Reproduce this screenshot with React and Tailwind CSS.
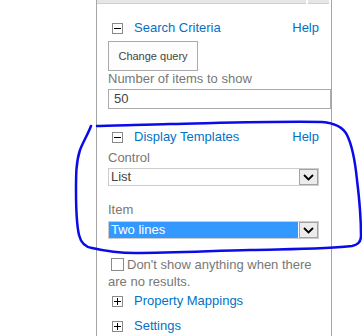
import React from "react";

const font = { fontFamily: '"Liberation Sans", Arial, sans-serif' };

function ToggleBox({ plus }) {
  return (
    <span className="flex h-[11px] w-[11px] shrink-0 items-center justify-center border border-[#8a8a8a] bg-white">
      <svg width="7" height="7" viewBox="0 0 7 7">
        <rect x="0" y="3" width="7" height="1" fill="#000" />
        {plus && <rect x="3" y="0" width="1" height="7" fill="#000" />}
      </svg>
    </span>
  );
}

function Header({ title, help, className = "" }) {
  return (
    <div className={`flex h-[16px] items-center pl-[4px] pr-[12px] text-[13px] leading-[16px] text-[#0072c6] ${className}`}>
      <ToggleBox plus={!help} />
      <span className="ml-[11px] flex-1">{title}</span>
      {help && <span>Help</span>}
    </div>
  );
}

function Select({ value, selected, className = "" }) {
  return (
    <div className={`flex h-[18px] w-[211px] items-stretch border border-[#cdcdcd] bg-white ${className}`}>
      <div
        className={`flex flex-1 items-center pl-[2px] text-[13px] leading-[16px] ${
          selected ? "bg-[#3399ff] text-white" : "text-[#444]"
        }`}
      >
        {value}
      </div>
      <div className="ml-[1px] flex w-[19px] items-center justify-center border border-[#a3a3a3] bg-[#ececec]">
        <svg width="11" height="7" viewBox="0 0 11 7">
          <polyline points="1,1 5.5,5.5 10,1" fill="none" stroke="#000" strokeWidth="1.8" />
        </svg>
      </div>
    </div>
  );
}

export default function App() {
  return (
    <div className="relative h-[336px] w-[362px] overflow-hidden bg-white" style={font}>
      <div className="ml-[96px] h-full w-[236px] border-x border-[#a6a6a6]">
        <div className="flex h-[4px]">
          <div className="w-[209px] border-b border-[#cfcfcf] bg-[#e6e6e6]" />
          <div className="w-[2px]" />
          <div className="w-[21px] border-b border-[#cfcfcf] bg-[#e6e6e6]" />
        </div>
        <div className="pl-[11px]">
          <Header title="Search Criteria" help className="mt-[16px]" />
          <button className="mt-[5px] flex h-[30px] w-[90px] items-center justify-center border border-[#ababab] bg-[#fdfdfd] text-[11px] text-[#444]">
            Change query
          </button>
          <div className="text-[13px] leading-[16px] text-[#777]">Number of items to show</div>
          <div className="mt-[2px] flex h-[20px] w-[223px] items-center border border-[#ababab] bg-white pl-[5px] text-[13px] text-[#444]">
            50
          </div>

          <Header title="Display Templates" help className="mt-[20px]" />
          <div className="mt-[5px] text-[13px] leading-[16px] text-[#777]">Control</div>
          <Select value="List" className="mt-[2px]" />
          <div className="mt-[16px] text-[13px] leading-[16px] text-[#777]">Item</div>
          <Select value="Two lines" selected className="mt-[3px]" />

          <p className="mt-[17px] pr-[14px] text-[13px] leading-[17px] text-[#777]">
            <span className="ml-[3px] mr-[3px] inline-block h-[13px] w-[13px] border border-[#8a8a8a] bg-white align-[-2px]" />
            Don't show anything when there are no results.
          </p>

          <Header title="Property Mappings" className="mt-[3px]" />
          <Header title="Settings" className="mt-[9px]" />
        </div>
      </div>

      <svg className="pointer-events-none absolute left-0 top-0" width="362" height="336" viewBox="0 0 362 336">
        <path
          d="M91,126 C88,134 83,142 80,150 C76,162 76,175 76,190 C76,205 76,222 79,235 C81,243 85,247 92,248 C105,251 118,253 135,253 C170,253 210,251 250,250 C290,249 330,249 352,246 C358,245 361,242 361,236 C361,215 359,196 357,180 C355,160 352,145 347,135 C343,127 335,123 322,122 C280,121 220,123 170,124 C140,125 115,125 97,126"
          fill="none"
          stroke="#0b0be8"
          strokeWidth="2.5"
          strokeLinecap="round"
        />
      </svg>
    </div>
  );
}
